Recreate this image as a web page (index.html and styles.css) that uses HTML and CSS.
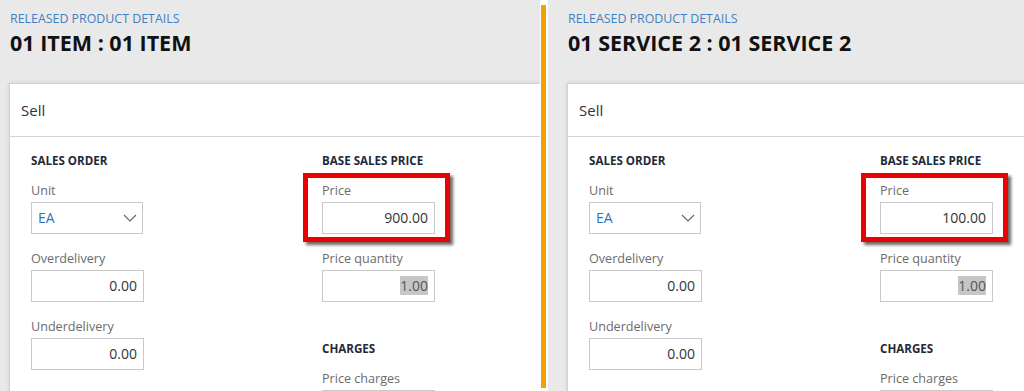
FILE: index.html
```html
<!DOCTYPE html>
<html lang="en">
<head>
    <meta charset="UTF-8">
    <meta name="viewport" content="width=device-width, initial-scale=1.0">
    <title>Released product details - Sell</title>
    <link rel="stylesheet" href="styles.css">
</head>
<body>
    <div class="screen">
        <section class="panel panel-left">
            <div class="crumb">RELEASED PRODUCT DETAILS</div>
            <h1 class="title">01 ITEM : 01 ITEM</h1>
            <div class="card">
                <div class="card-head">Sell</div>
                <div class="card-body">
                    <div class="col">
                        <div class="group-title">SALES ORDER</div>
                        <div class="field">
                            <div class="label">Unit</div>
                            <div class="box select">
                                <span class="link">EA</span>
                                <svg class="chevron" width="14" height="8" viewBox="0 0 14 8"><polyline points="1,1 7,7 13,1" fill="none" stroke="#666" stroke-width="1.1"/></svg>
                            </div>
                        </div>
                        <div class="field">
                            <div class="label">Overdelivery</div>
                            <div class="box num">0.00</div>
                        </div>
                        <div class="field">
                            <div class="label">Underdelivery</div>
                            <div class="box num">0.00</div>
                        </div>
                    </div>
                    <div class="col">
                        <div class="group-title">BASE SALES PRICE</div>
                        <div class="field marked">
                            <span class="callout"></span>
                            <div class="label">Price</div>
                            <div class="box num">900.00</div>
                        </div>
                        <div class="field">
                            <div class="label">Price quantity</div>
                            <div class="box num"><span class="selected">1.00</span></div>
                        </div>
                        <div class="group-title group-gap">CHARGES</div>
                        <div class="field">
                            <div class="label">Price charges</div>
                            <div class="box num"></div>
                        </div>
                    </div>
                </div>
            </div>
        </section>

        <div class="divider"><span class="bar"></span></div>

        <section class="panel panel-right">
            <div class="crumb">RELEASED PRODUCT DETAILS</div>
            <h1 class="title">01 SERVICE 2 : 01 SERVICE 2</h1>
            <div class="card">
                <div class="card-head">Sell</div>
                <div class="card-body">
                    <div class="col">
                        <div class="group-title">SALES ORDER</div>
                        <div class="field">
                            <div class="label">Unit</div>
                            <div class="box select">
                                <span class="link">EA</span>
                                <svg class="chevron" width="14" height="8" viewBox="0 0 14 8"><polyline points="1,1 7,7 13,1" fill="none" stroke="#666" stroke-width="1.1"/></svg>
                            </div>
                        </div>
                        <div class="field">
                            <div class="label">Overdelivery</div>
                            <div class="box num">0.00</div>
                        </div>
                        <div class="field">
                            <div class="label">Underdelivery</div>
                            <div class="box num">0.00</div>
                        </div>
                    </div>
                    <div class="col">
                        <div class="group-title">BASE SALES PRICE</div>
                        <div class="field marked">
                            <span class="callout"></span>
                            <div class="label">Price</div>
                            <div class="box num">100.00</div>
                        </div>
                        <div class="field">
                            <div class="label">Price quantity</div>
                            <div class="box num"><span class="selected">1.00</span></div>
                        </div>
                        <div class="group-title group-gap">CHARGES</div>
                        <div class="field">
                            <div class="label">Price charges</div>
                            <div class="box num"></div>
                        </div>
                    </div>
                </div>
            </div>
        </section>
    </div>
</body>
</html>
```
FILE: styles.css
```css
body {
    margin: 0;
    background-color: #fff;
    font-family: 'Open Sans', 'Noto Sans', sans-serif;
    color: #333;
}
.screen {
    display: flex;
    height: 391px;
    overflow: hidden;
}
.panel {
    background-color: #e9e9e9;
    overflow: hidden;
    padding-top: 10px;
    box-sizing: border-box;
}
.panel-left {
    width: 540px;
    padding-left: 9px;
}
.panel-right {
    flex: 1;
    padding-left: 19px;
}
.divider {
    width: 8px;
    padding-top: 5px;
    background-color: #fff;
}
.bar {
    display: block;
    width: 5px;
    height: 383px;
    margin-left: 1px;
    background-color: #f5a000;
}
.crumb {
    font-size: 12.4px;
    line-height: 17px;
    color: #3f80c0;
    margin-left: 1px;
}
.title {
    margin: 2px 0 0 1px;
    font-size: 21.5px;
    line-height: 27px;
    font-weight: 700;
    color: #111;
}
.card {
    margin-top: 27px;
    width: 620px;
    height: 400px;
    background-color: #fff;
    border: 1px solid #d2d2d2;
    box-shadow: 0 0 4px rgba(0,0,0,0.12);
}
.card-head {
    height: 52px;
    padding-left: 11px;
    font-size: 15px;
    line-height: 52px;
    border-bottom: 1px solid #d4d4d4;
}
.card-body {
    display: grid;
    grid-template-columns: 291px 200px;
    padding: 16px 0 0 21px;
}
.group-title {
    font-size: 11.6px;
    line-height: 16px;
    font-weight: 700;
    color: #1e2a38;
    margin-bottom: 13px;
}
.group-gap {
    margin-top: 39px;
}
.field {
    position: relative;
    margin-bottom: 16px;
}
.label {
    font-size: 12.6px;
    line-height: 18px;
    color: #6b6b6b;
    margin-bottom: 2px;
}
.box {
    width: 113px;
    height: 32px;
    box-sizing: border-box;
    border: 1px solid #c9c9c9;
    background-color: #fff;
    font-size: 14px;
    line-height: 30px;
    padding: 0 6px;
    color: #333;
}
.num {
    text-align: right;
}
.select {
    display: flex;
    align-items: center;
    justify-content: space-between;
    width: 112px;
}
.link {
    color: #2f74ba;
}
.chevron {
    margin-right: -1px;
}
.selected {
    background-color: #c6c6c6;
    color: #555;
}
.callout {
    position: absolute;
    left: -19px;
    top: -9px;
    width: 147px;
    height: 69px;
    box-sizing: border-box;
    border: 5px solid #ee0000;
    box-shadow: 3px 3px 3px rgba(0,0,0,0.6);
}
```
